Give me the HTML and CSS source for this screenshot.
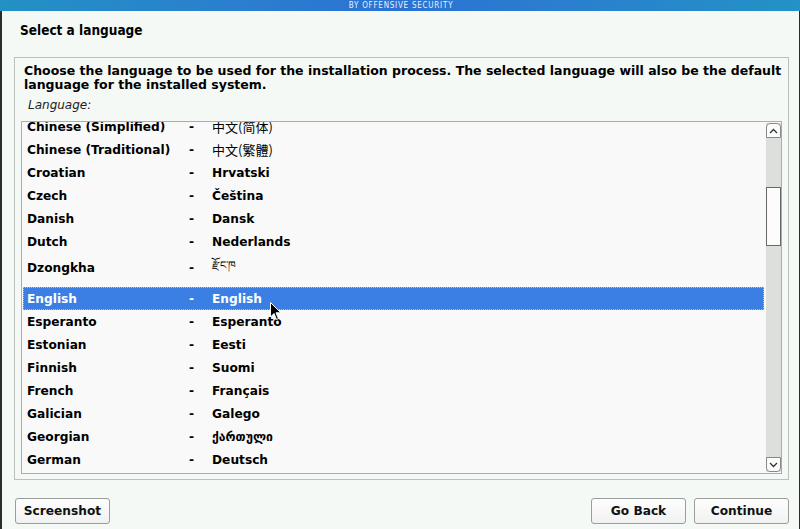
FILE: index.html
```html
<!DOCTYPE html>
<html>
<head>
<meta charset="utf-8">
<link rel="stylesheet" href="styles.css">
</head>
<body>
<div class="screen">
  <div class="banner"><span class="banner-text">BY OFFENSIVE SECURITY</span></div>
  <h1 class="title">Select a language</h1>
  <div class="frame">
    <p class="intro">Choose the language to be used for the installation process. The selected language will also be the default language for the installed system.</p>
    <div class="label">Language:</div>
    <div class="listbox">
      <div class="list-view">
        <div class="list">
          <div class="row"><span class="name">Chinese (Simplified)</span><span class="dash">-</span><span class="native cjk">中文(简体)</span></div>
          <div class="row"><span class="name">Chinese (Traditional)</span><span class="dash">-</span><span class="native cjk">中文(繁體)</span></div>
          <div class="row"><span class="name">Croatian</span><span class="dash">-</span><span class="native">Hrvatski</span></div>
          <div class="row"><span class="name">Czech</span><span class="dash">-</span><span class="native">Čeština</span></div>
          <div class="row"><span class="name">Danish</span><span class="dash">-</span><span class="native">Dansk</span></div>
          <div class="row"><span class="name">Dutch</span><span class="dash">-</span><span class="native">Nederlands</span></div>
          <div class="row tall"><span class="name">Dzongkha</span><span class="dash">-</span><span class="native tib">རྫོང་ཁ</span></div>
          <div class="row selected"><span class="name">English</span><span class="dash">-</span><span class="native">English</span></div>
          <div class="row"><span class="name">Esperanto</span><span class="dash">-</span><span class="native">Esperanto</span></div>
          <div class="row"><span class="name">Estonian</span><span class="dash">-</span><span class="native">Eesti</span></div>
          <div class="row"><span class="name">Finnish</span><span class="dash">-</span><span class="native">Suomi</span></div>
          <div class="row"><span class="name">French</span><span class="dash">-</span><span class="native">Français</span></div>
          <div class="row"><span class="name">Galician</span><span class="dash">-</span><span class="native">Galego</span></div>
          <div class="row"><span class="name">Georgian</span><span class="dash">-</span><span class="native">ქართული</span></div>
          <div class="row"><span class="name">German</span><span class="dash">-</span><span class="native">Deutsch</span></div>
          <div class="row"><span class="name">Greek</span><span class="dash">-</span><span class="native">Ελληνικά</span></div>
        </div>
      </div>
      <div class="scrollbar">
        <div class="sb-btn sb-up"><svg width="9" height="6" viewBox="0 0 9 6"><path d="M1 5 L4.5 1.5 L8 5" fill="none" stroke="#333" stroke-width="1.3"/></svg></div>
        <div class="sb-track">
          <div class="sb-gap-top"></div>
          <div class="sb-thumb"></div>
        </div>
        <div class="sb-btn sb-down"><svg width="9" height="6" viewBox="0 0 9 6"><path d="M1 1 L4.5 4.5 L8 1" fill="none" stroke="#333" stroke-width="1.3"/></svg></div>
      </div>
    </div>
  </div>
  <div class="buttons">
    <button class="btn">Screenshot</button>
    <div class="spacer"></div>
    <button class="btn">Go Back</button>
    <button class="btn">Continue</button>
  </div>
  <svg class="cursor" width="12" height="19" viewBox="0 0 12 19"><path d="M0.5 0.5 L0.5 15 L4 11.5 L6.5 17.5 L8.5 16.6 L6 10.8 L10.8 10.8 Z" fill="#000" stroke="#fff" stroke-width="1"/></svg>
</div>
</body>
</html>
```

FILE: styles.css
```css
* { box-sizing: border-box; }
html, body {
  margin: 0;
  padding: 0;
  width: 800px;
  height: 529px;
  overflow: hidden;
  background: #2b2b2b;
}
.screen {
  position: relative;
  width: 797px;
  height: 529px;
  margin-left: 2px;
  margin-right: 1px;
  background: #f5f9f6;
  font-family: "DejaVu Sans", sans-serif;
  color: #000;
  display: flex;
  flex-direction: column;
}
.banner {
  height: 11px;
  margin-left: -2px;
  width: 800px;
  background: linear-gradient(90deg, #2391c4 0%, #2a7fcf 30%, #2b72d3 50%, #2a7fcf 70%, #2392c5 100%);
  display: flex;
  justify-content: center;
  align-items: flex-end;
  overflow: hidden;
}
.banner-text {
  color: #e8f1fb;
  font-family: "DejaVu Sans Condensed", "DejaVu Sans", sans-serif;
  font-size: 8px;
  letter-spacing: 0.75px;
  line-height: 10px;
  padding-left: 2px;
}
.title {
  margin: 0;
  padding: 12px 0 0 18px;
  height: 46px;
  font-size: 13.5px;
  font-weight: bold;
  font-family: "DejaVu Sans Condensed", "DejaVu Sans", sans-serif;
  line-height: 14px;
}
.frame {
  margin-left: 12px;
  width: 775px;
  height: 423px;
  border: 1px solid #b9c1ba;
  padding: 6px 5px 5px 6px;
  display: flex;
  flex-direction: column;
}
.intro {
  margin: 0 0 0 3px;
  font-size: 12.5px;
  font-weight: bold;
  line-height: 14px;
}
.label {
  margin: 6px 0 0 7px;
  font-size: 12px;
  font-style: italic;
  color: #222;
  line-height: 14px;
  height: 23px;
}
.listbox {
  flex: 1;
  border: 1px solid #a8aea8;
  background: #f8f9f8;
  display: flex;
  overflow: hidden;
  margin-right: 1px;
}
.list-view {
  flex: 1;
  overflow: hidden;
  padding: 0 2px 0 1px;
}
.list {
  margin-top: -7px;
}
.row {
  height: 23px;
  display: flex;
  align-items: center;
  font-size: 12.2px;
  font-weight: bold;
  padding-left: 4px;
}
.row.tall {
  height: 34px;
  padding-bottom: 4px;
}
.row.selected {
  background: #3b7fe4;
  color: #fff;
  outline: 1px dotted #9cc0f2;
  outline-offset: -1px;
}
.name { width: 162px; }
.dash { width: 23px; }
.cjk {
  font-family: "Noto Sans CJK SC", sans-serif;
  font-weight: normal;
  font-size: 13px;
}
.tib {
  font-weight: normal;
  font-size: 11px;
}
.scrollbar {
  width: 15px;
  margin: 1px 0 1px 0;
  display: flex;
  flex-direction: column;
  background: #dcdfdc;
}
.sb-btn {
  height: 15px;
  background: #fbfcfb;
  border: 1px solid #868a86;
  display: flex;
  align-items: center;
  justify-content: center;
}
.sb-up { border-radius: 4px 4px 0 0; }
.sb-down { border-radius: 0 0 4px 4px; }
.sb-track {
  flex: 1;
  display: flex;
  flex-direction: column;
}
.sb-gap-top { height: 49px; }
.sb-thumb {
  height: 59px;
  background: #fbfcfb;
  border: 1px solid #666a66;
}
.buttons {
  display: flex;
  padding: 18px 0 0 13px;
  gap: 8px;
  width: 787px;
}
.spacer { flex: 1; }
.btn {
  width: 95px;
  height: 26px;
  border: 1px solid #9a9e9a;
  border-radius: 3px;
  background: linear-gradient(#fdfdfd, #f0f1f0);
  font-family: "DejaVu Sans", sans-serif;
  font-weight: bold;
  font-size: 12.2px;
  color: #111;
  padding: 0;
}
.cursor {
  position: absolute;
  left: 268px;
  top: 302px;
}
```
